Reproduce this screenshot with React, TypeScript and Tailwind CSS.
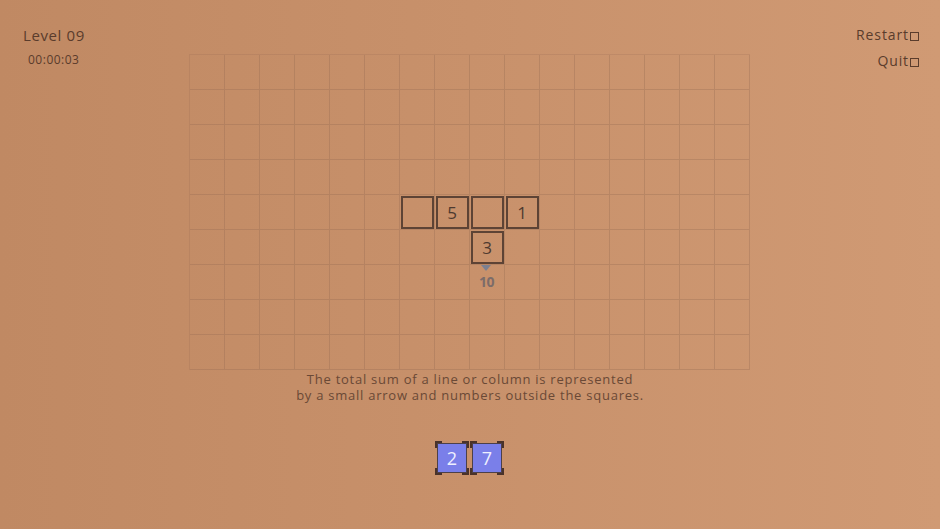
import React from "react";

const COLS = 16;
const ROWS = 9;

type Tile = { r: number; c: number; v: string };
const tiles: Tile[] = [
  { r: 4, c: 6, v: "" },
  { r: 4, c: 7, v: "5" },
  { r: 4, c: 8, v: "" },
  { r: 4, c: 9, v: "1" },
  { r: 5, c: 8, v: "3" },
];

function Cell({ r, c }: { r: number; c: number }) {
  const t = tiles.find((x) => x.r === r && x.c === c);
  const isSum = r === 6 && c === 8;
  return (
    <div className="relative border-r border-b border-[#8f6650]/30 flex items-center justify-center">
      {t && (
        <div className="w-[33px] h-[33px] ml-[1px] mt-[1px] border-2 border-[#5d4335] flex items-center justify-center text-[17px] text-[#4e3a30]">
          {t.v}
        </div>
      )}
      {isSum && (
        <div className="flex flex-col items-center self-start">
          <svg width="10" height="6" viewBox="0 0 10 6">
            <path d="M0 0 L10 0 L5 6 Z" fill="#7c8090" />
          </svg>
          <span className="text-[14px] font-bold leading-none mt-[4px] text-[#7c6c69] tracking-[-0.5px]">10</span>
        </div>
      )}
    </div>
  );
}

function Hand({ v }: { v: string }) {
  return (
    <div className="relative w-[34px] h-[34px] flex items-center justify-center">
      <span className="absolute left-0 top-0 w-[7px] h-[7px] border-l-2 border-t-2 border-[#4a3229]" />
      <span className="absolute right-0 top-0 w-[7px] h-[7px] border-r-2 border-t-2 border-[#4a3229]" />
      <span className="absolute left-0 bottom-0 w-[7px] h-[7px] border-l-2 border-b-2 border-[#4a3229]" />
      <span className="absolute right-0 bottom-0 w-[7px] h-[7px] border-r-2 border-b-2 border-[#4a3229]" />
      <div className="w-[30px] h-[30px] bg-[#7a7fe9] border border-[#4d4048] flex items-center justify-center text-[18px] text-[#eef0ff]">
        {v}
      </div>
    </div>
  );
}

export default function App() {
  const cells = [];
  for (let r = 0; r < ROWS; r++) for (let c = 0; c < COLS; c++) cells.push(<Cell key={`${r}-${c}`} r={r} c={c} />);
  return (
    <div
      className="relative w-[940px] h-[529px] overflow-hidden bg-gradient-to-r from-[#c08963] via-[#c8916b] to-[#d09a74]"
      style={{ fontFamily: '"Open Sans", "Liberation Sans", sans-serif' }}
    >
      {/* HUD */}
      <div className="absolute inset-x-0 top-0 flex justify-between px-[21px] pt-[25px] z-10">
        <div className="flex flex-col items-start">
          <span className="text-[15px] leading-[20px] text-[#5a3c2c] ml-[2px] tracking-[0.6px]">Level 09</span>
          <span className="text-[12px] leading-[14px] text-[#5a3c2c] ml-[7px] mt-[8px] tracking-[0.5px]">00:00:03</span>
        </div>
        <div className="flex flex-col items-end">
          <span className="text-[14px] leading-[20px] text-[#5a3c2c] flex items-center tracking-[0.9px]">
            Restart
            <span className="inline-block w-[9px] h-[9px] border border-[#5a3c2c] ml-[1px] mt-[3px]" />
          </span>
          <span className="text-[14px] leading-[20px] text-[#5a3c2c] flex items-center mt-[6px] tracking-[0.9px]">
            Quit
            <span className="inline-block w-[9px] h-[9px] border border-[#5a3c2c] ml-[1px] mt-[3px]" />
          </span>
        </div>
      </div>

      <div className="flex flex-col items-center pt-[54px]">
        <div className="grid grid-cols-[repeat(16,35px)] grid-rows-[repeat(9,35px)] border-l border-t border-[#8f6650]/20 -ml-[2px]">
          {cells}
        </div>
        <p className="mt-[1px] text-center text-[13px] leading-[16px] text-[#6a4936] tracking-[0.75px]">
          The total sum of a line or column is represented
          <br />
          by a small arrow and numbers outside the squares.
        </p>
        <div className="flex gap-[1px] mt-[38px] -ml-[1px]">
          <Hand v="2" />
          <Hand v="7" />
        </div>
      </div>
    </div>
  );
}
